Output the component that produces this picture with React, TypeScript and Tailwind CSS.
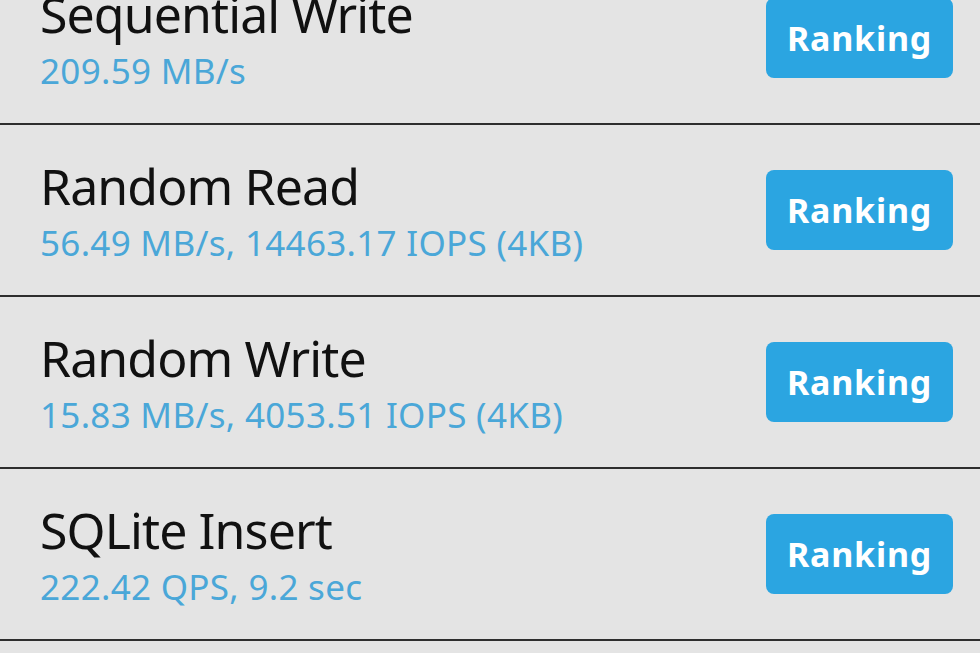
import React from "react";

const rows = [
  { title: "Sequential Write", sub: "209.59 MB/s" },
  { title: "Random Read", sub: "56.49 MB/s, 14463.17 IOPS (4KB)" },
  { title: "Random Write", sub: "15.83 MB/s, 4053.51 IOPS (4KB)" },
  { title: "SQLite Insert", sub: "222.42 QPS, 9.2 sec" },
  { title: "SQLite Update", sub: "" },
];

export default function App() {
  return (
    <div
      className="w-[980px] h-[653px] overflow-hidden bg-[#e4e4e4]"
      style={{ fontFamily: '"Noto Sans", "Open Sans", sans-serif' }}
    >
      <div className="mt-[-47px] flex flex-col">
        {rows.map((r, i) => (
          <div
            key={i}
            className="h-[172px] shrink-0 border-b-2 border-[#2e2e2e] flex items-center justify-between pl-[40px] pr-[27px]"
          >
            <div className="flex flex-col self-start pt-[33px]">
              <div className="text-[50px] leading-[56px] mb-[9px] tracking-[-0.9px] text-[#111111] whitespace-nowrap">
                {r.title}
              </div>
              <div className="text-[35px] leading-[40px] tracking-[0.3px] text-[#4aa7d8] whitespace-nowrap">
                {r.sub}
              </div>
            </div>
            <div className="w-[187px] h-[80px] rounded-[8px] bg-[#2ba5e1] flex items-center justify-center text-white font-bold text-[34px] tracking-[0.8px]">
              Ranking
            </div>
          </div>
        ))}
      </div>
    </div>
  );
}
